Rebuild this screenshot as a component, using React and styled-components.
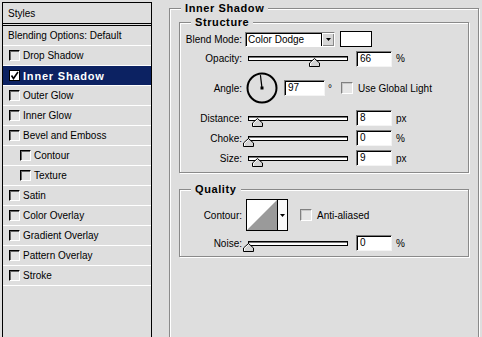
import React from 'react';
import styled, { createGlobalStyle } from 'styled-components';

const GlobalStyle = createGlobalStyle`
  html, body {
    margin: 0;
    padding: 0;
    background: #dedede;
  }
  body {
    font-family: "Liberation Sans", Arial, sans-serif;
    font-size: 10px;
    color: #000;
    overflow: hidden;
  }
  * {
    box-sizing: border-box;
  }
`;

const Window = styled.div`
  display: flex;
  width: 482px;
  height: 337px;
  overflow: hidden;
  background: #dedede;
`;

const Sidebar = styled.div`
  flex: none;
  width: 150px;
  height: 345px;
  margin: 2px 0 0 2px;
  border: 1px solid #000;
  background: #dedede;
`;

const SideHeader = styled.div`
  height: 23px;
  display: flex;
  align-items: center;
  padding-left: 5px;
  border-bottom: 3px double #000;
`;

const SideItem = styled.div`
  height: 20px;
  display: flex;
  align-items: center;
  padding-left: ${p => (p.$plain ? 5 : p.$indent ? 17 : 6)}px;
  border-bottom: 1px solid #fff;
  background: ${p => (p.$selected ? '#0c2262' : 'transparent')};
  color: ${p => (p.$selected ? '#fff' : '#000')};
  font-weight: ${p => (p.$selected ? 700 : 400)};
  font-size: ${p => (p.$selected ? 11 : 10)}px;
  letter-spacing: ${p => (p.$selected ? '0.8px' : '0')};
  white-space: nowrap;
`;

const ItemText = styled.span`
  margin-left: 3px;
`;

const Box = styled.span`
  flex: none;
  display: inline-flex;
  align-items: center;
  justify-content: center;
  width: ${p => (p.$panel ? 12 : 11)}px;
  height: ${p => (p.$panel ? 12 : 11)}px;
  border: 1px solid;
  border-color: ${p =>
    p.$checked ? '#000' : p.$panel ? '#808080 #fff #fff #808080' : '#000 #fff #fff #000'};
  background: ${p => (p.$checked ? '#fff' : p.$panel ? '#e6e6e6' : '#e2e2e2')};
  box-shadow: ${p => (p.$checked ? 'none' : p.$panel ? 'inset 1px 1px 0 #c8c8c8' : 'inset 1px 1px 0 #666')};
`;

const Main = styled.div`
  flex: 1;
  padding: 8px 0 0 17px;
`;

const Group = styled.div`
  position: relative;
  width: ${p => (p.$w ? `${p.$w}px` : '100%')};
  height: ${p => (p.$h ? `${p.$h}px` : 'auto')};
  margin-top: ${p => p.$mt || 0}px;
  padding: ${p => p.$pad};
  border: 1px solid #8a8a8a;
  box-shadow: inset 1px 1px 0 #fff, 1px 1px 0 #fff;
`;

const Legend = styled.span`
  position: absolute;
  top: -7px;
  left: 11px;
  padding: 0 4px;
  background: #dedede;
  font-weight: 700;
  font-size: 11px;
  line-height: 12px;
  letter-spacing: 0.6px;
`;

const Row = styled.div`
  display: flex;
  align-items: center;
  height: ${p => p.$h}px;
  margin-top: ${p => p.$mt || 0}px;
  white-space: nowrap;
`;

const Label = styled.span`
  flex: none;
  width: 62px;
  text-align: right;
  margin-right: ${p => p.$gap}px;
`;

const Select = styled.div`
  display: flex;
  width: 90px;
  height: 15px;
  border: 1px solid;
  border-color: #808080 #fff #fff #808080;
  box-shadow: inset 1px 1px 0 #000;
  background: #fff;
`;

const SelectText = styled.span`
  flex: 1;
  padding-left: 2px;
  line-height: 13px;
`;

const SelectButton = styled.span`
  flex: none;
  display: flex;
  align-items: center;
  justify-content: center;
  width: 13px;
  border-left: 1px solid #000;
  background: #d6d6d6;
  box-shadow: inset 1px 1px 0 #fff, inset -1px -1px 0 #888;
`;

const Swatch = styled.span`
  width: 32px;
  height: 16px;
  margin-left: 5px;
  border: 1px solid #000;
  background: #fff;
`;

const Track = styled.div`
  position: relative;
  flex: none;
  width: 100px;
  height: 5px;
  border: 1px solid #000;
  background: #fff;
  box-shadow: inset 0 1px 0 #777;
`;

const Thumb = styled.svg`
  position: absolute;
  top: 1px;
  width: 11px;
  height: 9px;
  overflow: visible;
`;

const Field = styled.div`
  flex: none;
  width: ${p => p.$w || 36}px;
  height: 16px;
  margin-left: ${p => p.$ml}px;
  padding-left: 3px;
  border: 1px solid;
  border-color: #7a7a7a #f4f4f4 #f4f4f4 #7a7a7a;
  box-shadow: inset 1px 1px 0 #000;
  background: #fff;
  line-height: 14px;
`;

const Unit = styled.span`
  margin-left: ${p => p.$ml || 4}px;
`;

const Dial = styled.svg`
  flex: none;
  width: 32px;
  height: 32px;
`;

const CheckLabel = styled.span`
  margin-left: 5px;
`;

const ContourBox = styled.div`
  flex: none;
  display: flex;
  width: 42px;
  height: 32px;
  border: 1px solid #000;
  background: #fff;
`;

const ContourArrow = styled.span`
  flex: 1;
  display: flex;
  align-items: center;
  justify-content: center;
  border-left: 1px solid #000;
  background: #fafafa;
`;

const DownArrow = () => (
  <svg width="5" height="3" viewBox="0 0 5 3">
    <polygon points="0,0 5,0 2.5,3" fill="#000" />
  </svg>
);

const Checkbox = ({ checked, panel, style }) => (
  <Box $checked={checked} $panel={panel} style={style}>
    {checked && (
      <svg width="9" height="9" viewBox="0 0 9 9">
        <polyline points="1.5,4.5 3.5,7.5 8,1" fill="none" stroke="#000" strokeWidth="1.6" />
      </svg>
    )}
  </Box>
);

const Slider = ({ pos, gap = 6 }) => (
  <Track style={{ marginLeft: gap }}>
    <Thumb viewBox="0 0 11 9" style={{ left: pos - 6 }}>
      <polygon points="5.5,0.5 10.5,5 10.5,8.5 0.5,8.5 0.5,5" fill="#d4d4d4" stroke="#000" />
      <polyline points="1.5,8 1.5,5.3 5.5,1.6" fill="none" stroke="#fff" />
    </Thumb>
  </Track>
);

const effects = [
  { name: 'Drop Shadow' },
  { name: 'Inner Shadow', selected: true },
  { name: 'Outer Glow' },
  { name: 'Inner Glow' },
  { name: 'Bevel and Emboss' },
  { name: 'Contour', indent: true },
  { name: 'Texture', indent: true },
  { name: 'Satin' },
  { name: 'Color Overlay' },
  { name: 'Gradient Overlay' },
  { name: 'Pattern Overlay' },
  { name: 'Stroke' },
];

const angle = 97;
const rad = (angle * Math.PI) / 180;

export default function App() {
  return (
    <Window>
      <GlobalStyle />
      <Sidebar>
        <SideHeader>Styles</SideHeader>
        <SideItem $plain>Blending Options: Default</SideItem>
        {effects.map(fx => (
          <SideItem key={fx.name} $selected={fx.selected} $indent={fx.indent}>
            <Checkbox checked={fx.selected} />
            <ItemText>{fx.name}</ItemText>
          </SideItem>
        ))}
      </Sidebar>

      <Main>
        <Group $w={310} $h={345} $pad="13px 9px 0 9px">
          <Legend>Inner Shadow</Legend>

          <Group $pad="8px 0 6px 0">
            <Legend>Structure</Legend>
            <Row $h={16}>
              <Label $gap={3}>Blend Mode:</Label>
              <Select>
                <SelectText>Color Dodge</SelectText>
                <SelectButton>
                  <DownArrow />
                </SelectButton>
              </Select>
              <Swatch />
            </Row>
            <Row $h={17} $mt={3}>
              <Label $gap={0}>Opacity:</Label>
              <Slider pos={66} />
              <Field $ml={8}>66</Field>
              <Unit>%</Unit>
            </Row>
            <Row $h={32} $mt={5}>
              <Label $gap={4}>Angle:</Label>
              <Dial viewBox="0 0 32 32">
                <circle cx="16" cy="16" r="14.5" fill="none" stroke="#000" strokeWidth="2" />
                <line
                  x1="16"
                  y1="16"
                  x2={16 + 13 * Math.cos(rad)}
                  y2={16 - 13 * Math.sin(rad)}
                  stroke="#000"
                  strokeWidth="1.2"
                />
                <rect x="14.5" y="14.5" width="3" height="3" fill="#000" />
              </Dial>
              <Field $ml={6} $w={41}>97</Field>
              <Unit $ml={3}>°</Unit>
              <Checkbox panel style={{ marginLeft: 9 }} />
              <CheckLabel>Use Global Light</CheckLabel>
            </Row>
            <Row $h={16} $mt={6}>
              <Label $gap={0}>Distance:</Label>
              <Slider pos={9} />
              <Field $ml={8}>8</Field>
              <Unit>px</Unit>
            </Row>
            <Row $h={16} $mt={4}>
              <Label $gap={0}>Choke:</Label>
              <Slider pos={0} />
              <Field $ml={8}>0</Field>
              <Unit>%</Unit>
            </Row>
            <Row $h={16} $mt={4}>
              <Label $gap={0}>Size:</Label>
              <Slider pos={9} />
              <Field $ml={8}>9</Field>
              <Unit>px</Unit>
            </Row>
          </Group>

          <Group $mt={16} $pad="9px 0 5px 0">
            <Legend>Quality</Legend>
            <Row $h={32}>
              <Label $gap={4}>Contour:</Label>
              <ContourBox>
                <svg width="30" height="30" viewBox="0 0 30 30">
                  <polygon points="0,30 30,0 30,30" fill="#9a9a9a" />
                </svg>
                <ContourArrow>
                  <DownArrow />
                </ContourArrow>
              </ContourBox>
              <Checkbox panel style={{ marginLeft: 12 }} />
              <CheckLabel>Anti-aliased</CheckLabel>
            </Row>
            <Row $h={16} $mt={4}>
              <Label $gap={0}>Noise:</Label>
              <Slider pos={0} />
              <Field $ml={8}>0</Field>
              <Unit>%</Unit>
            </Row>
          </Group>
        </Group>
      </Main>
    </Window>
  );
}
